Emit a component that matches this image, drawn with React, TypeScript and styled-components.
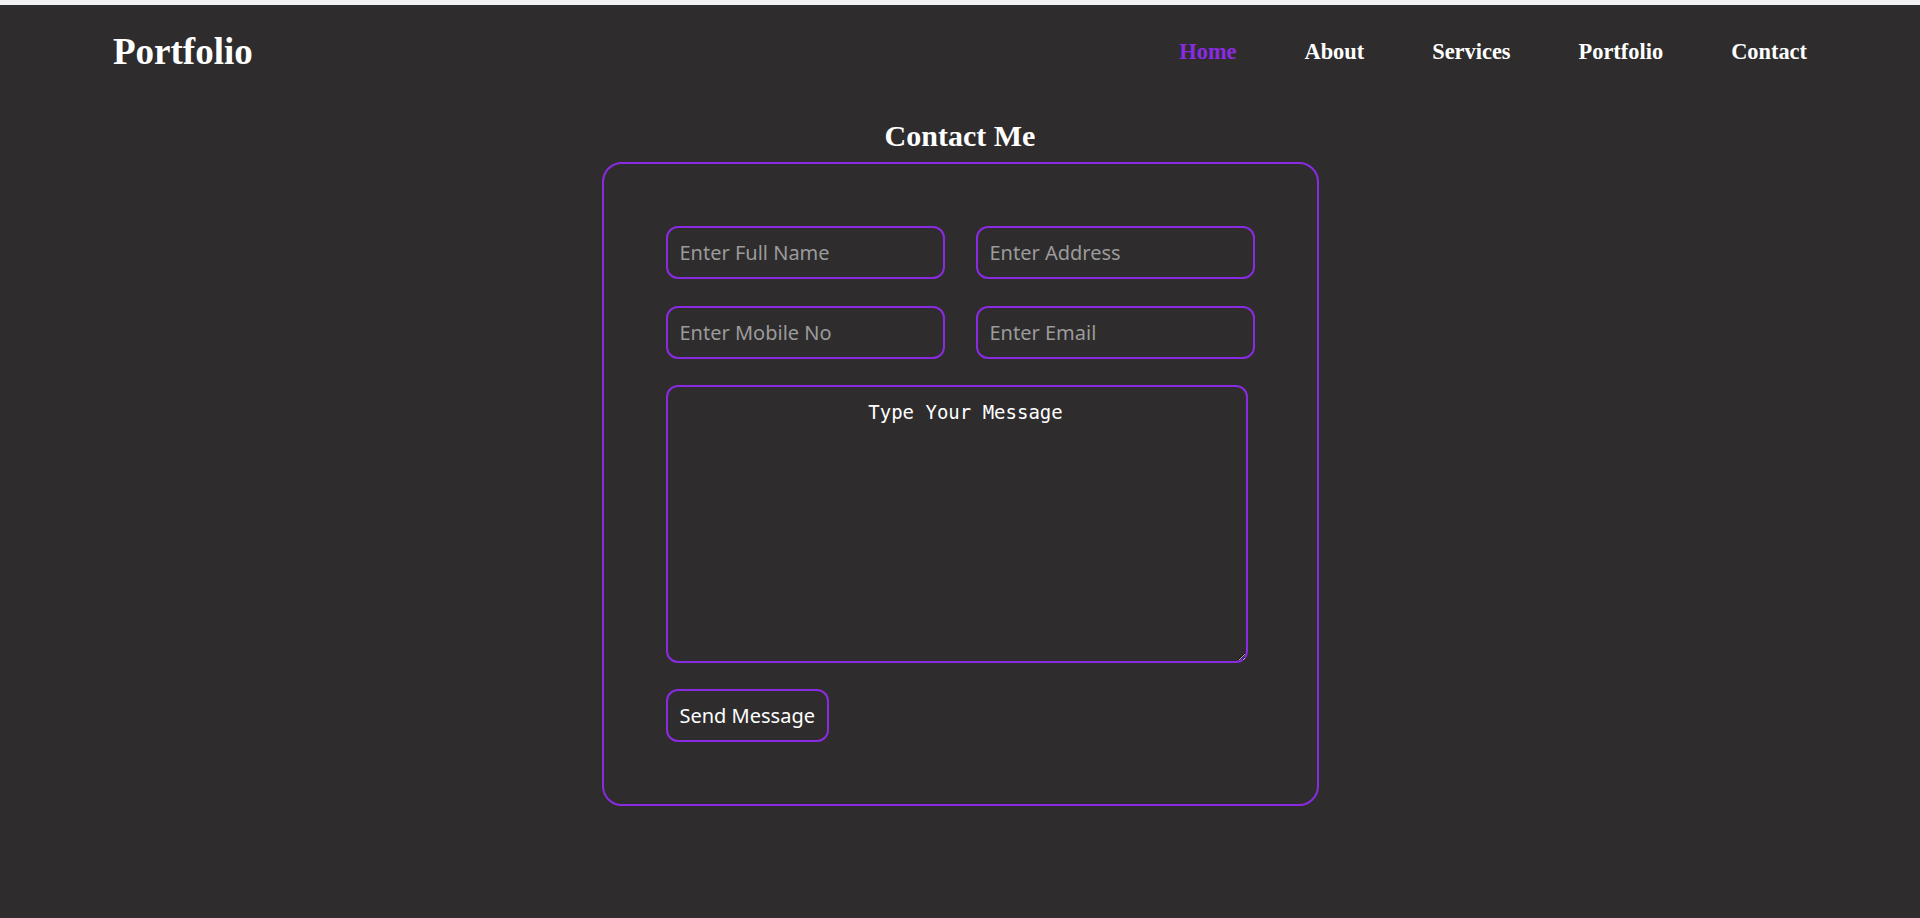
import styled, { createGlobalStyle } from "styled-components";

const GlobalStyle = createGlobalStyle`
  * {
    box-sizing: border-box;
  }
  html, body {
    margin: 0;
    padding: 0;
    background: #f1f1f4;
  }
  body {
    padding-top: 5px;
  }
`;

const Page = styled.div`
  min-height: 913px;
  background: #2e2c2d;
  color: #fff;
  font-family: "Liberation Serif", "Times New Roman", serif;
`;

const Header = styled.header`
  height: 93px;
  padding: 0 113px;
  display: flex;
  align-items: center;
  justify-content: space-between;
`;

const Logo = styled.div`
  font-size: 37px;
  font-weight: 700;
  color: #fff;
`;

const Nav = styled.nav`
  display: flex;
  align-items: center;
  gap: 68px;
`;

const NavLink = styled.a<{ $active?: boolean }>`
  font-size: 22.4px;
  font-weight: 700;
  text-decoration: none;
  cursor: pointer;
  color: ${(p) => (p.$active ? "#8a2be2" : "#fff")};
`;

const Section = styled.section`
  display: flex;
  flex-direction: column;
  align-items: center;
`;

const Title = styled.h2`
  margin: 21px 0 9px;
  font-size: 30px;
  font-weight: 700;
`;

const FormBox = styled.form`
  width: 717px;
  padding: 62px;
  border: 2px solid #8a2be2;
  border-radius: 20px;
  display: flex;
  flex-direction: column;
  align-items: flex-start;
  gap: 26px;
`;

const InputGrid = styled.div`
  width: 100%;
  display: grid;
  grid-template-columns: 1fr 1fr;
  column-gap: 31px;
  row-gap: 27px;
`;

const Field = styled.input`
  width: 100%;
  min-width: 0;
  height: 53px;
  padding: 0 12px;
  border: 2px solid #8a2be2;
  border-radius: 12px;
  background: transparent;
  color: #fff;
  font-family: "Noto Sans", "Open Sans", sans-serif;
  font-size: 20px;
  outline: none;

  &::placeholder {
    color: #9b9b9b;
  }
`;

const Message = styled.textarea`
  width: 582px;
  height: 278px;
  padding: 14px 14px 14px 32px;
  border: 2px solid #8a2be2;
  border-radius: 12px;
  background: transparent;
  color: #fff;
  font-family: "DejaVu Sans Mono", "Liberation Mono", monospace;
  font-size: 19px;
  text-align: center;
  outline: none;

  &::placeholder {
    color: #fff;
  }
`;

const SendButton = styled.button`
  height: 53px;
  padding: 0 12px;
  border: 2px solid #8a2be2;
  border-radius: 12px;
  background: transparent;
  color: #fff;
  font-family: "Noto Sans", "Open Sans", sans-serif;
  font-size: 20px;
  white-space: nowrap;
  cursor: pointer;
`;

const links = ["Home", "About", "Services", "Portfolio", "Contact"];

const App = () => {
  return (
    <>
      <GlobalStyle />
      <Page>
        <Header>
          <Logo>Portfolio</Logo>
          <Nav>
            {links.map((l, i) => (
              <NavLink key={l} $active={i === 0}>
                {l}
              </NavLink>
            ))}
          </Nav>
        </Header>
        <Section>
          <Title>Contact Me</Title>
          <FormBox onSubmit={(e) => e.preventDefault()}>
            <InputGrid>
              <Field type="text" placeholder="Enter Full Name" />
              <Field type="text" placeholder="Enter Address" />
              <Field type="text" placeholder="Enter Mobile No" />
              <Field type="email" placeholder="Enter Email" />
            </InputGrid>
            <Message placeholder="Type Your Message" />
            <SendButton type="submit">Send Message</SendButton>
          </FormBox>
        </Section>
      </Page>
    </>
  );
};

export default App;
